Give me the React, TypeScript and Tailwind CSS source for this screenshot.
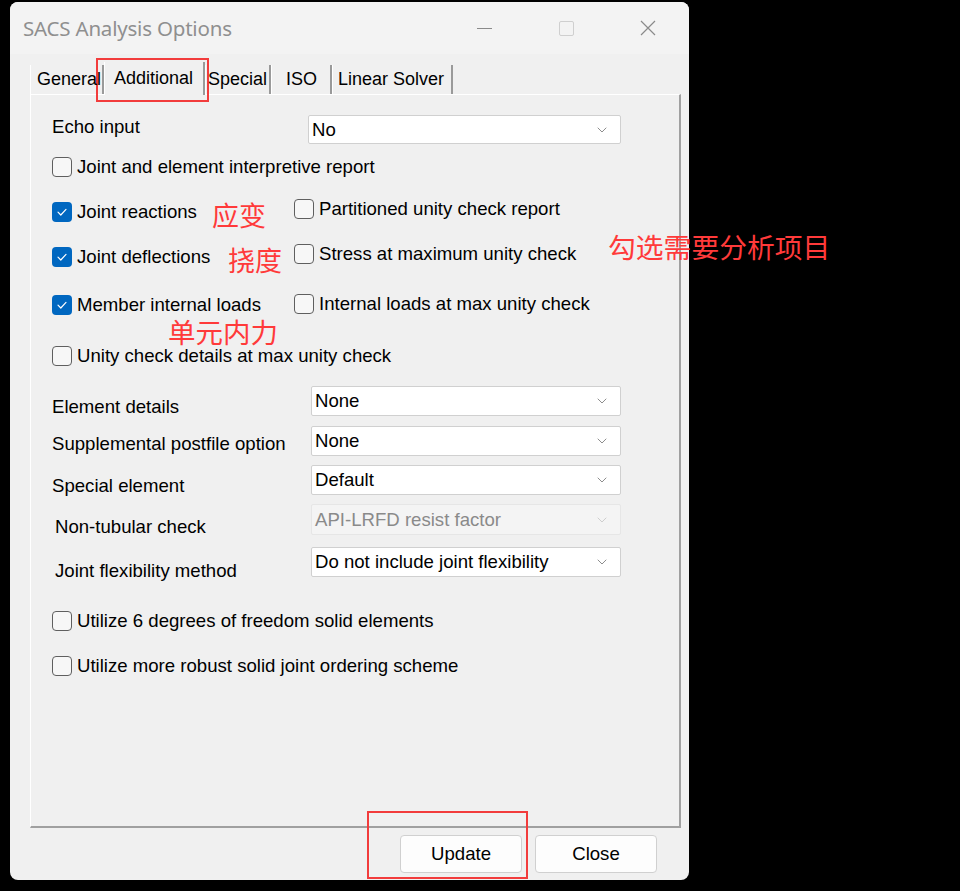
import { ChevronDown } from "lucide-react"

const FONT = "font-['Liberation_Sans',Arial,sans-serif]"
const CJK = "font-['Noto_Sans_CJK_SC',sans-serif]"

function CheckBox({ checked = false }: { checked?: boolean }) {
  if (checked) {
    return (
      <span className="flex h-[20px] w-[20px] shrink-0 items-center justify-center rounded-[4px] bg-[#0067c0]">
        <svg width="12" height="10" viewBox="0 0 12 10" fill="none">
          <path d="M2 5.2 L4.8 8 L10 2.4" stroke="white" strokeWidth="1.2" strokeLinecap="round" strokeLinejoin="round" />
        </svg>
      </span>
    )
  }
  return <span className="h-[20px] w-[20px] shrink-0 rounded-[4px] border border-[#5f5f5f] bg-[#f7f7f7]" />
}

function Check({ label, checked }: { label: string; checked?: boolean }) {
  return (
    <div className="flex items-center gap-[5px]">
      <CheckBox checked={checked} />
      <span className="text-[18.6px] leading-none text-black">{label}</span>
    </div>
  )
}

function Select({ value, disabled = false, height = "h-[30px]" }: { value: string; disabled?: boolean; height?: string }) {
  return (
    <div
      className={`flex ${height} w-[310px] items-center justify-between rounded-[2px] border pl-[3px] pr-[10px] text-[18.6px] ${
        disabled ? "border-[#e6e6e6] bg-[#f4f4f4] text-[#8a8a8a]" : "border-[#d0d0d0] bg-white text-black"
      }`}
    >
      <span>{value}</span>
      <ChevronDown className={`h-4 w-4 ${disabled ? "text-[#c4c4c4]" : "text-[#707070]"}`} strokeWidth={1.2} />
    </div>
  )
}

function SelectRow({ label, value, disabled, indent = false, labelPad = "pt-[10px]", mt }: {
  label: string
  value: string
  disabled?: boolean
  indent?: boolean
  labelPad?: string
  mt: string
}) {
  return (
    <div className={`flex items-start ${mt}`}>
      <div className={`w-[259px] text-[18.6px] leading-none text-black ${labelPad} ${indent ? "pl-[3px]" : ""}`}>{label}</div>
      <Select value={value} disabled={disabled} height={disabled ? "h-[31px]" : "h-[30px]"} />
    </div>
  )
}

const TABS = [
  { name: "General", w: "w-[74px]", pad: "pl-[6px]" },
  { name: "Additional", w: "w-[101px]", pad: "pl-[9px]", active: true },
  { name: "Special", w: "w-[66px]", pad: "pl-[2px]" },
  { name: "ISO", w: "w-[61px]", pad: "pl-[14px]" },
  { name: "Linear Solver", w: "w-[121px]", pad: "pl-[5px]" },
]

export default function App() {
  return (
    <div className={`relative h-[891px] w-[960px] overflow-hidden bg-black ${FONT}`}>
      <div className="ml-[10px] pt-[2px]">
        <div className="relative flex h-[878px] w-[679px] flex-col rounded-[8px] bg-[#f0f0f0]">
          {/* title bar */}
          <div className="flex h-[52px] items-center rounded-t-[8px] bg-[#f3f3f3] pl-[13px]">
            <span className="font-['Noto_Sans',sans-serif] text-[20.5px] tracking-[-0.2px] text-[#8f8f8f]">SACS Analysis Options</span>
            <div className="ml-auto flex items-center">
              <div className="flex w-[82px] justify-center">
                <span className="h-px w-[15px] bg-[#8a8a8a]" />
              </div>
              <div className="flex w-[82px] justify-center">
                <span className="h-[15px] w-[15px] rounded-[2px] border border-[#cfcfcf]" />
              </div>
              <div className="flex w-[82px] justify-center">
                <svg width="16" height="16" viewBox="0 0 16 16">
                  <path d="M1 1 L15 15 M15 1 L1 15" stroke="#8a8a8a" strokeWidth="1.2" />
                </svg>
              </div>
            </div>
          </div>

          {/* tabs */}
          <div className="mt-[7px] flex h-[33px] items-end pl-[20px]">
            {TABS.map((t) => (
              <div
                key={t.name}
                className={`${t.w} ${t.pad} flex shrink-0 items-center whitespace-nowrap border-l border-r-2 border-l-white border-r-[#9a9a9a] text-[18px] text-black ${
                  t.active ? "relative z-10 -mb-px h-[33px] bg-[#f0f0f0]" : "h-[29px]"
                }`}
              >
                <span className="relative z-20">{t.name}</span>
              </div>
            ))}
          </div>

          {/* panel */}
          <div className="ml-[20px] flex h-[734px] w-[651px] flex-col border-t border-l border-r-2 border-b-2 border-t-white border-l-white border-r-[#a0a0a0] border-b-[#a0a0a0] pl-[21px] pt-[20px]">
            <div className="flex items-start">
              <div className="w-[256px] pt-[3px] text-[18.6px] leading-none text-black">Echo input</div>
              <div className="flex h-[29px] w-[313px] items-center justify-between rounded-[2px] border border-[#d0d0d0] bg-white pl-[3px] pr-[10px] text-[18.6px] text-black">
                <span>No</span>
                <ChevronDown className="h-4 w-4 text-[#707070]" strokeWidth={1.2} />
              </div>
            </div>

            <div className="mt-[8px] flex h-[30px] items-center">
              <Check label="Joint and element interpretive report" />
            </div>

            <div className="mt-[14px] flex h-[30px]">
              <div className="w-[242px] pt-[6px]">
                <Check label="Joint reactions" checked />
              </div>
              <div className="pt-[3px]">
                <Check label="Partitioned unity check report" />
              </div>
            </div>

            <div className="mt-[15px] flex h-[30px]">
              <div className="w-[242px] pt-[6px]">
                <Check label="Joint deflections" checked />
              </div>
              <div className="pt-[3px]">
                <Check label="Stress at maximum unity check" />
              </div>
            </div>

            <div className="mt-[19px] flex h-[30px]">
              <div className="w-[242px] pt-[5px]">
                <Check label="Member internal loads" checked />
              </div>
              <div className="pt-[4px]">
                <Check label="Internal loads at max unity check" />
              </div>
            </div>

            <div className="mt-[21px] flex h-[30px] items-center">
              <Check label="Unity check details at max unity check" />
            </div>

            <SelectRow mt="mt-[15px]" label="Element details" value="None" labelPad="pt-[12px]" />
            <SelectRow mt="mt-[9px]" label="Supplemental postfile option" value="None" labelPad="pt-[9px]" />
            <SelectRow mt="mt-[9px]" label="Special element" value="Default" labelPad="pt-[12px]" />
            <SelectRow mt="mt-[9px]" label="Non-tubular check" value="API-LRFD resist factor" disabled indent labelPad="pt-[14px]" />
            <SelectRow mt="mt-[10px]" label="Joint flexibility method" value="Do not include joint flexibility" indent labelPad="pt-[15px]" />

            <div className="mt-[26px] flex h-[30px] items-center">
              <Check label="Utilize 6 degrees of freedom solid elements" />
            </div>
            <div className="mt-[15px] flex h-[30px] items-center">
              <Check label="Utilize more robust solid joint ordering scheme" />
            </div>
          </div>

          {/* buttons */}
          <div className="mt-[7px] flex justify-end gap-[13px] pr-[32px]">
            <button className="h-[38px] w-[122px] rounded-[4px] border border-[#d0d0d0] bg-[#fdfdfd] text-[18.6px] text-black">Update</button>
            <button className="h-[38px] w-[122px] rounded-[4px] border border-[#d0d0d0] bg-[#fdfdfd] text-[18.6px] text-black">Close</button>
          </div>

          {/* annotations */}
          <div className="absolute left-[86px] top-[56px] h-[44px] w-[113px] border-2 border-[#f23c3c]" />
          <div className="absolute left-[357px] top-[809px] h-[68px] w-[161px] border-2 border-[#f23c3c]" />
          <span className={`absolute left-[202px] top-[199px] text-[27px] leading-none text-[#ff3a3a] ${CJK}`}>应变</span>
          <span className={`absolute left-[218px] top-[244px] text-[27px] leading-none text-[#ff3a3a] ${CJK}`}>挠度</span>
          <span className={`absolute left-[158px] top-[317px] text-[27.5px] leading-[25px] text-[#ff3a3a] ${CJK}`}>单元内力</span>
        </div>
      </div>
      <span className={`absolute left-[608px] top-[233px] text-[27.8px] leading-none text-[#ff3a3a] ${CJK}`}>勾选需要分析项目</span>
    </div>
  )
}
